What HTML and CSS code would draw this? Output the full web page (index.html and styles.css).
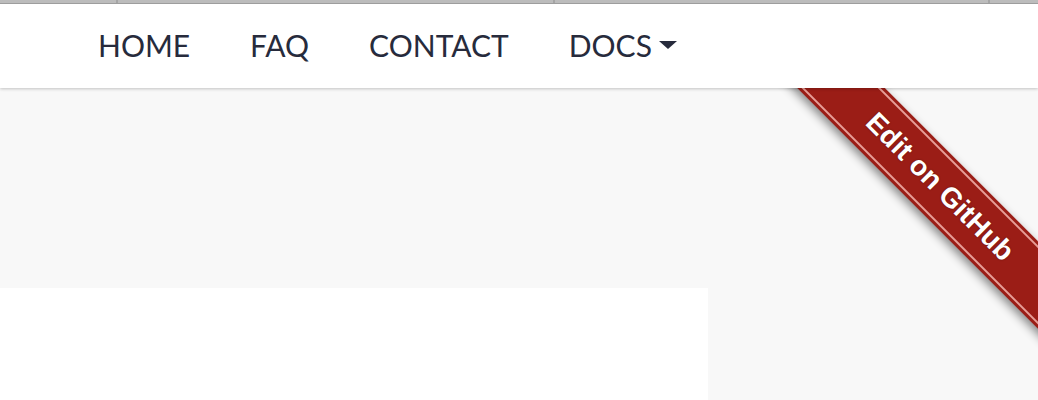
FILE: index.html
```html
<!DOCTYPE html>
<html lang="en">
<head>
<meta charset="utf-8">
<title>Docs</title>
<link rel="stylesheet" href="styles.css">
</head>
<body>
<div class="chrome">
  <span class="tick tick-a"></span>
  <span class="tick tick-b"></span>
  <span class="tick tick-c"></span>
</div>
<header class="navbar">
  <nav class="menu">
    <a class="menu-link" href="#">HOME</a>
    <a class="menu-link" href="#">FAQ</a>
    <a class="menu-link" href="#">CONTACT</a>
    <a class="menu-link" href="#">DOCS<span class="caret"></span></a>
  </nav>
</header>
<main class="page">
  <section class="hero"></section>
  <section class="content-card"></section>
</main>
<div class="ribbon-wrap">
  <a class="ribbon" href="#"><span class="ribbon-inner">Edit on GitHub</span></a>
</div>
</body>
</html>
```

FILE: styles.css
```css
html, body {
  margin: 0;
  padding: 0;
}
body {
  background: #f8f8f8;
  width: 1038px;
  height: 400px;
  overflow: hidden;
  position: relative;
  font-family: Lato, "Open Sans", sans-serif;
}
.chrome {
  position: relative;
  z-index: 6;
  height: 3px;
  background: #bcbcbc;
  border-bottom: 1px solid #9d9d9d;
  display: flex;
}
.tick {
  width: 2px;
  height: 3px;
  background: #a5a5a5;
}
.tick-a { margin-left: 116px; }
.tick-b { margin-left: 435px; }
.tick-c { margin-left: 433px; }
.navbar {
  position: relative;
  z-index: 5;
  background: #ffffff;
  height: 84px;
  box-shadow: 0 1px 3px rgba(0, 0, 0, 0.22);
  display: flex;
  align-items: center;
}
.menu {
  display: flex;
  padding-left: 68px;
  padding-bottom: 2px;
}
.menu-link {
  color: #272b3c;
  text-decoration: none;
  font-size: 30px;
  padding: 0 30px;
  display: flex;
  align-items: center;
}
.caret {
  display: inline-block;
  width: 0;
  height: 0;
  margin-left: 7px;
  border-left: 9px solid transparent;
  border-right: 9px solid transparent;
  border-top: 8px solid #272b3c;
  margin-top: 0;
}
.page {
  display: flex;
  flex-direction: column;
}
.hero {
  height: 200px;
}
.content-card {
  width: 708px;
  height: 120px;
  background: #ffffff;
}
.ribbon-wrap {
  position: absolute;
  top: 0;
  right: 0;
  width: 300px;
  height: 400px;
  overflow: hidden;
  z-index: 3;
}
.ribbon {
  position: absolute;
  left: -48px;
  top: 156px;
  width: 500px;
  height: 62px;
  box-sizing: border-box;
  padding: 3px 0;
  background: #9b1d16;
  transform: rotate(45deg);
  box-shadow: 0 4px 10px rgba(0, 0, 0, 0.45);
  text-decoration: none;
  display: flex;
}
.ribbon-inner {
  flex: 1;
  border-top: 2px solid rgba(255, 200, 195, 0.75);
  border-bottom: 2px solid rgba(255, 200, 195, 0.75);
  color: #ffffff;
  font-family: "Liberation Sans", Arial, sans-serif;
  font-weight: 700;
  font-size: 28px;
  display: flex;
  align-items: center;
  justify-content: center;
  text-shadow: 0 0 2px rgba(0, 0, 0, 0.4);
}
```
